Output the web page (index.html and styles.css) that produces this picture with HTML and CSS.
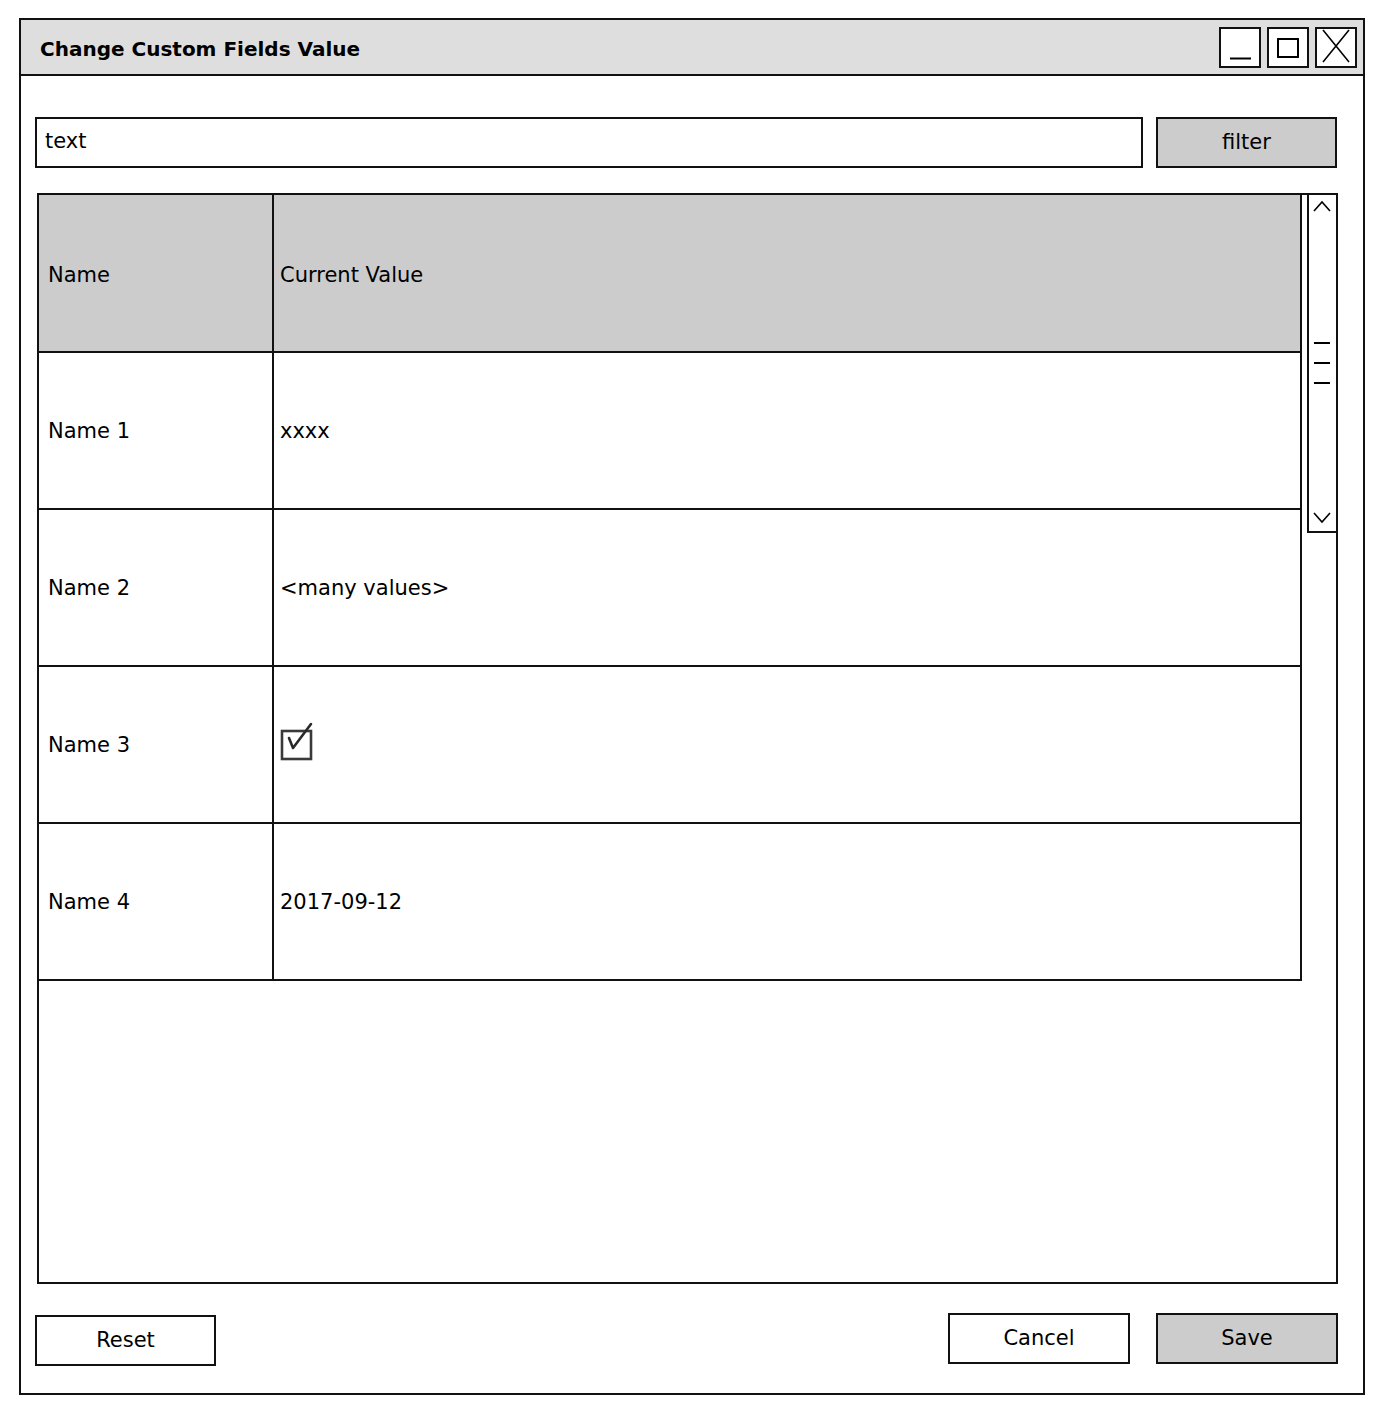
FILE: index.html
```html
<!DOCTYPE html>
<html lang="en">
<head>
<meta charset="utf-8">
<title>Change Custom Fields Value</title>
<link rel="stylesheet" href="styles.css">
</head>
<body>
<div class="window">
  <div class="titlebar">
    <div class="title">Change Custom Fields Value</div>
    <div class="controls">
      <div class="ctl">
        <svg width="38" height="37" viewBox="0 0 38 37"><line x1="9" y1="29.5" x2="30" y2="29.5" stroke="#000" stroke-width="2"/></svg>
      </div>
      <div class="ctl">
        <svg width="38" height="37" viewBox="0 0 38 37"><rect x="9" y="10" width="20" height="18" fill="none" stroke="#000" stroke-width="2"/></svg>
      </div>
      <div class="ctl">
        <svg width="38" height="37" viewBox="0 0 38 37"><path d="M6 1 L32 33 M32 1 L6 33" stroke="#000" stroke-width="1.6" fill="none"/></svg>
      </div>
    </div>
  </div>

  <div class="content">
    <div class="search-row">
      <div class="input">text</div>
      <div class="btn btn-grey">filter</div>
    </div>

    <div class="list">
      <div class="grid">
        <div class="cell head">Name</div>
        <div class="cell head">Current Value</div>

        <div class="cell">Name 1</div>
        <div class="cell">xxxx</div>

        <div class="cell">Name 2</div>
        <div class="cell">&lt;many values&gt;</div>

        <div class="cell">Name 3</div>
        <div class="cell">
          <svg class="check" width="34" height="40" viewBox="0 0 34 40">
            <rect x="2" y="9" width="29" height="28" fill="none" stroke="#3a3a3a" stroke-width="2.6"/>
            <path d="M9 16 L13 26 L31 2" fill="none" stroke="#2a2a2a" stroke-width="2.6" stroke-linecap="round" stroke-linejoin="round"/>
          </svg>
        </div>

        <div class="cell">Name 4</div>
        <div class="cell">2017-09-12</div>
      </div>

      <div class="scrollbar">
        <svg width="27" height="336" viewBox="0 0 27 336">
          <path d="M5 16 L13 7 L21 16" fill="none" stroke="#000" stroke-width="1.6"/>
          <line x1="5" y1="148" x2="21" y2="148" stroke="#000" stroke-width="2"/>
          <line x1="5" y1="168" x2="21" y2="168" stroke="#000" stroke-width="2"/>
          <line x1="5" y1="188" x2="21" y2="188" stroke="#000" stroke-width="2"/>
          <path d="M5 318 L13 327 L21 318" fill="none" stroke="#000" stroke-width="1.6"/>
        </svg>
      </div>
    </div>

    <div class="footer">
      <div class="btn btn-white reset">Reset</div>
      <div class="actions">
        <div class="btn btn-white wide">Cancel</div>
        <div class="btn btn-grey wide">Save</div>
      </div>
    </div>
  </div>
</div>
</body>
</html>
```

FILE: styles.css
```css
* {
  box-sizing: border-box;
}

html, body {
  margin: 0;
  padding: 0;
  background: #ffffff;
}

body {
  font-family: "DejaVu Sans", "Liberation Sans", sans-serif;
  font-size: 21px;
  color: #000;
  padding: 18px 0 0 19px;
}

.window {
  width: 1346px;
  height: 1377px;
  border: 2px solid #111;
  display: flex;
  flex-direction: column;
  background: #fff;
}

/* title bar */
.titlebar {
  height: 56px;
  background: #dedede;
  border-bottom: 2px solid #111;
  display: flex;
  justify-content: space-between;
  align-items: flex-start;
  padding: 7px 6px 0 19px;
}

.title {
  font-weight: bold;
  font-size: 20px;
  line-height: 40px;
  padding-top: 2px;
}

.controls {
  display: flex;
  gap: 6px;
}

.ctl {
  width: 42px;
  height: 41px;
  border: 2px solid #111;
  background: #fff;
}

.ctl svg {
  display: block;
}

/* body of the dialog */
.content {
  flex: 1;
  display: flex;
  flex-direction: column;
  padding: 41px 26px 26px 14px;
}

.search-row {
  display: flex;
  gap: 13px;
  height: 51px;
}

.input {
  flex: 1;
  border: 2px solid #111;
  background: #fff;
  display: flex;
  align-items: center;
  padding: 0 0 3px 8px;
}

.btn {
  width: 181px;
  height: 51px;
  border: 2px solid #111;
  display: flex;
  align-items: center;
  justify-content: center;
  padding-bottom: 1px;
}

.btn.wide {
  width: 182px;
}

.btn-grey {
  background: #cccccc;
}

.btn-white {
  background: #fff;
}

/* list box with grid and scrollbar */
.list {
  margin: 25px -1px 0 2px;
  height: 1091px;
  border: 2px solid #111;
  display: flex;
  align-items: flex-start;
  gap: 5px;
}

.grid {
  width: 1263px;
  display: grid;
  grid-template-columns: 235px 1026px;
  grid-template-rows: 158px;
  grid-auto-rows: 157px;
  border-right: 2px solid #111;
}

.cell {
  border-right: 2px solid #111;
  border-bottom: 2px solid #111;
  display: flex;
  align-items: center;
  padding-left: 9px;
}

.cell:nth-child(even) {
  border-right: none;
  padding-left: 6px;
}

.cell.head {
  background: #cccccc;
  padding-top: 3px;
}

.check {
  display: block;
  margin-top: -6px;
}

.scrollbar {
  width: 31px;
  height: 340px;
  margin: -2px -2px 0 0;
  border: 2px solid #111;
  background: #fff;
}

.scrollbar svg {
  display: block;
}

/* bottom buttons */
.footer {
  margin-top: 29px;
  height: 54px;
  display: flex;
  justify-content: space-between;
  align-items: flex-start;
}

.reset {
  margin-top: 2px;
}

.actions {
  display: flex;
  gap: 26px;
  margin-right: -1px;
}
```
